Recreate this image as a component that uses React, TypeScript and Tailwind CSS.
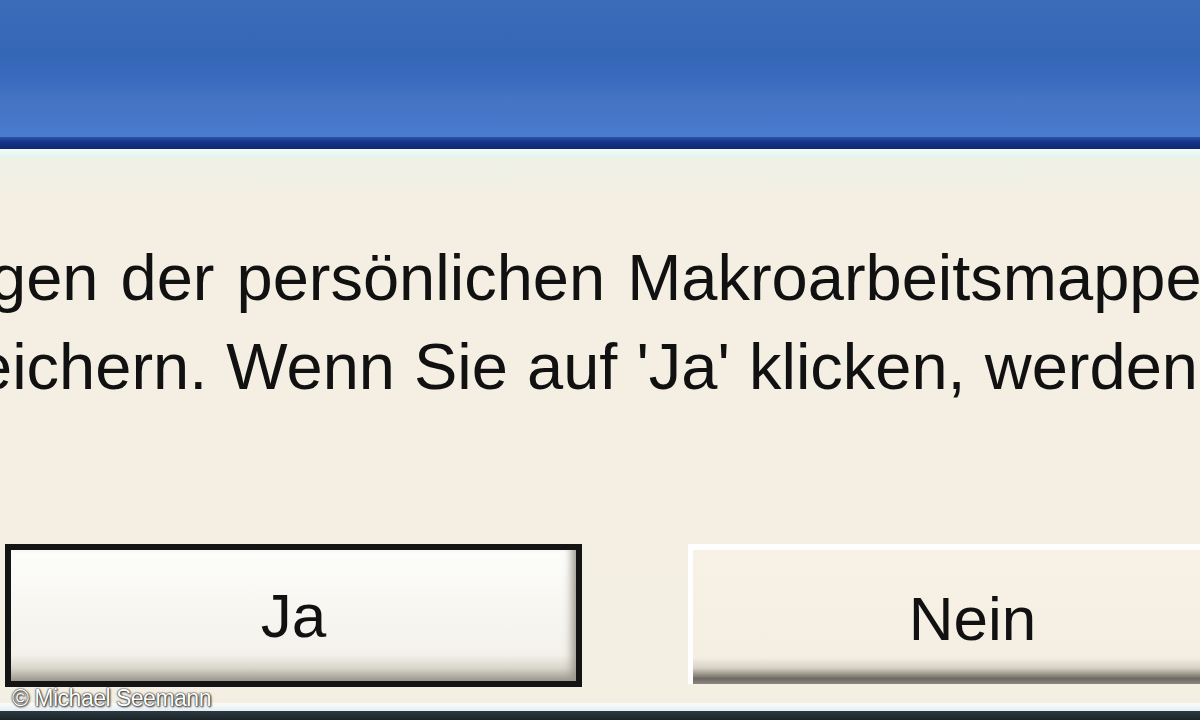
export default function App() {
  return (
    <div className="relative flex h-[720px] w-[1200px] flex-col overflow-hidden bg-[#f4efe3] font-['Liberation_Sans',Arial,sans-serif] text-[#111]">
      {/* title bar */}
      <div className="h-[137px] shrink-0 bg-[linear-gradient(180deg,#3a6cba_0%,#3567b7_40%,#3a6bbf_60%,#4674c4_72%,#4676c8_85%,#4a7cd0_100%)]" />
      <div className="h-[12px] shrink-0 bg-[linear-gradient(180deg,#2a55a8_0%,#16348a_40%,#0f2a72_100%)]" />
      <div className="h-[8px] shrink-0 bg-[linear-gradient(180deg,#f2fbf8_0%,#e6f5ef_100%)]" />

      {/* body */}
      <div className="flex flex-1 flex-col bg-[linear-gradient(180deg,#eef1e6_0%,#f5efe3_8%,#f4efe3_100%)]">
        <div className="mt-[76px] whitespace-nowrap text-[65px] leading-[89px]">
          <div className="ml-[-10px] [word-spacing:4px]">gen der persönlichen Makroarbeitsmappe</div>
          <div className="ml-[-24px] [word-spacing:1px]">eichern. Wenn Sie auf 'Ja' klicken, werden</div>
        </div>

        <div className="mt-[133px] flex">
          <button className="ml-[5px] flex h-[143px] w-[577px] shrink-0 items-center justify-center border-[6px] border-[#141414] bg-[linear-gradient(180deg,#fdfdfb_0%,#f3f1ea_80%,#d9d6cc_90%,#9b978c_100%)] text-[62px] shadow-[inset_-10px_0_8px_-6px_#9a968c]">
            Ja
          </button>
          <button className="ml-[106px] flex h-[140px] w-[564px] shrink-0 items-center justify-center border-t-[6px] border-l-[5px] border-white bg-[linear-gradient(180deg,#f7f1e6_0%,#f5efe3_80%,#d8d2c6_88%,#6e6a62_96%,#8c8880_100%)] pt-[2px] text-[62px]">
            Nein
          </button>
        </div>
      </div>

      {/* bottom edge */}
      <div className="h-[8px] shrink-0 bg-[linear-gradient(180deg,#fbfcfa_0%,#e4eef4_100%)]" />
      <div className="h-[9px] shrink-0 bg-[linear-gradient(180deg,#2c3a40_0%,#1b252a_100%)]" />

      {/* watermark */}
      <div className="absolute left-[12px] top-[685px] text-[23px] leading-[26px] tracking-[-0.5px] text-white [text-shadow:0_0_1px_#222,0_0_2px_#333,1px_1px_2px_#333]">
        © Michael Seemann
      </div>
    </div>
  );
}
